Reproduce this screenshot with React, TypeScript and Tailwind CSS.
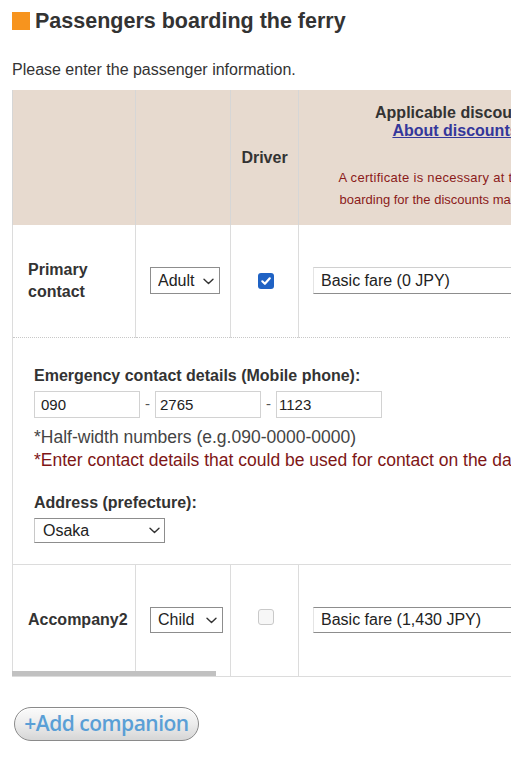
import React from "react";

function Chevron({ className }: { className: string }) {
  return (
    <svg
      className={className}
      width="11"
      height="7"
      viewBox="0 0 11 7"
      fill="none"
      stroke="#333"
      strokeWidth="1.4"
      strokeLinecap="round"
      strokeLinejoin="round"
    >
      <path d="M1 1.2 L5.5 5.6 L10 1.2" />
    </svg>
  );
}

function Checkbox({ checked }: { checked: boolean }) {
  if (checked) {
    return (
      <span className="inline-flex h-[16px] w-[16px] items-center justify-center rounded-[3px] bg-[#1f62c4]">
        <svg width="12" height="12" viewBox="0 0 12 12" fill="none" stroke="#fff" strokeWidth="2.2" strokeLinecap="round" strokeLinejoin="round">
          <path d="M2.3 6.3 L4.9 8.8 L9.8 3.3" />
        </svg>
      </span>
    );
  }
  return <span className="inline-block h-[16px] w-[16px] rounded-[3px] border border-[#c9c9c9] bg-[#f7f7f7]" />;
}

export default function App() {
  const th = "border-x border-[#d6d6d6] align-middle";
  const td = "border-x border-[#dcdcdc] align-middle";
  return (
    <div className="min-h-[763px] w-[523px] bg-white px-3 pt-3 font-['Liberation_Sans',Arial,sans-serif] text-[#333]">
      <h2 className="flex items-center gap-[5px] text-[21.5px] font-bold leading-[18px]">
        <span className="h-[18px] w-[18px] shrink-0 bg-[#f7941e]" />
        Passengers boarding the ferry
      </h2>
      <p className="mt-[29px] text-[16px] leading-[22px]">Please enter the passenger information.</p>

      <div className="relative mt-[9px]">
        <div className="overflow-x-hidden">
          <table className="w-[1220px] table-fixed border-collapse">
            <colgroup>
              <col className="w-[123px]" />
              <col className="w-[95px]" />
              <col className="w-[68px]" />
              <col className="w-[314px]" />
              <col className="w-[620px]" />
            </colgroup>
            <thead>
              <tr className="h-[135px] bg-[#e7dacf]">
                <th className={th}></th>
                <th className={th}></th>
                <th className={`${th} text-[16px] font-bold`}>Driver</th>
                <th className={`${th} text-center font-normal`}>
                  <div className="text-[16px] font-bold leading-[18px]">Applicable discounts</div>
                  <div className="text-[16px] font-bold leading-[18px]">
                    <a href="#" className="text-[#34379b] underline">About discounts</a>
                  </div>
                  <div className="mt-[27px] text-[13px] leading-[22px] text-[#8b1a1a]">
                    <span className="tracking-[0.3px]">A certificate is necessary at the time of</span>
                    <br />
                    boarding for the discounts marked with *
                  </div>
                </th>
                <th className={th}></th>
              </tr>
            </thead>
            <tbody>
              <tr className="h-[112px] border-b border-dotted border-[#c8c8c8]">
                <td className={`${td} pl-[15px] text-[16px] font-bold leading-[22px]`}>
                  Primary
                  <br />
                  contact
                </td>
                <td className={`${td} pl-[14px]`}>
                  <div className="relative inline-block">
                    <select defaultValue="Adult" className="block h-[27px] w-[70px] appearance-none border border-[#8d8d8d] bg-white pl-[7px] text-[16px] text-[#222] outline-none">
                      <option>Adult</option>
                      <option>Child</option>
                    </select>
                    <Chevron className="pointer-events-none absolute right-[6px] top-[11px]" />
                  </div>
                </td>
                <td className={`${td} pl-[3px] text-center`}>
                  <div className="flex justify-center">
                    <Checkbox checked />
                  </div>
                </td>
                <td className={`${td} pl-[14px]`}>
                  <select defaultValue="b" className="block h-[27px] w-[300px] appearance-none border border-l-[#e4e4e4] border-t-[#d0d0d0] border-r-[#8d8d8d] border-b-[#8d8d8d] bg-white pl-[7px] text-[16px] text-[#222] outline-none">
                    <option value="b">Basic fare (0 JPY)</option>
                  </select>
                </td>
                <td className={td}></td>
              </tr>
              <tr className="h-[226px] border-b border-[#dcdcdc]">
                <td colSpan={5} className="border-x border-[#dcdcdc] pl-[21px] pt-[27px] pb-[21px] align-top">
                  <div className="text-[16px] font-bold leading-[22px]">Emergency contact details (Mobile phone):</div>
                  <div className="mt-[4px] flex items-center">
                    <input defaultValue="090" className="h-[27px] w-[106px] border border-[#d2d2d2] px-[6px] text-[15px] text-[#222] outline-none" />
                    <span className="mx-[5px] text-[15px] text-[#555]">-</span>
                    <input defaultValue="2765" className="h-[27px] w-[106px] border border-[#d2d2d2] px-[4px] text-[15px] text-[#222] outline-none" />
                    <span className="mx-[5px] text-[15px] text-[#555]">-</span>
                    <input defaultValue="1123" className="h-[27px] w-[106px] border border-[#d2d2d2] px-[2px] text-[15px] text-[#222] outline-none" />
                  </div>
                  <div className="mt-[8px] whitespace-nowrap text-[17.5px] leading-[23px] text-[#444]">*Half-width numbers (e.g.090-0000-0000)</div>
                  <div className="whitespace-nowrap text-[17.5px] leading-[23px] text-[#7e1616]">
                    *Enter contact details that could be used for contact on the day of boarding.
                  </div>
                  <div className="mt-[20px] text-[16px] font-bold leading-[22px]">Address (prefecture):</div>
                  <div className="relative mt-[4px] inline-block">
                    <select defaultValue="Osaka" className="block h-[25px] w-[131px] appearance-none border border-[#8d8d8d] border-l-[#c8c8c8] bg-white pl-[8px] text-[16px] text-[#222] outline-none">
                      <option>Osaka</option>
                      <option>Tokyo</option>
                    </select>
                    <Chevron className="pointer-events-none absolute right-[5px] top-[9px]" />
                  </div>
                </td>
              </tr>
              <tr className="h-[112px] border-b border-[#dcdcdc]">
                <td className={`${td} pl-[15px] text-[16px] font-bold leading-[22px]`}>Accompany2</td>
                <td className={`${td} pl-[14px]`}>
                  <div className="relative inline-block">
                    <select defaultValue="Child" className="block h-[26px] w-[73px] appearance-none border border-[#8d8d8d] bg-white pl-[7px] text-[16px] text-[#222] outline-none">
                      <option>Adult</option>
                      <option>Child</option>
                    </select>
                    <Chevron className="pointer-events-none absolute right-[6px] top-[10px]" />
                  </div>
                </td>
                <td className={`${td} text-center`}>
                  <div className="flex justify-center pb-[6px] pl-[3px]">
                    <Checkbox checked={false} />
                  </div>
                </td>
                <td className={`${td} pl-[14px]`}>
                  <select defaultValue="b" className="block h-[26px] w-[300px] appearance-none border border-l-[#e4e4e4] border-t-[#8d8d8d] border-r-[#8d8d8d] border-b-[#8d8d8d] bg-white pl-[7px] text-[16px] text-[#222] outline-none">
                    <option value="b">Basic fare (1,430 JPY)</option>
                  </select>
                </td>
                <td className={td}></td>
              </tr>
            </tbody>
          </table>
        </div>
        <div className="absolute bottom-[1px] left-0 h-[5px] w-[204px] bg-[#c1c1c1]" />
      </div>

      <button
        type="button"
        className="mt-[30px] ml-[2px] flex h-[34px] w-[185px] items-center justify-center rounded-full border-[1.5px] border-[#8a8a8a] bg-gradient-to-b from-[#fbfbfb] via-[#ececec] to-[#d6d6d6] font-['Open_Sans',sans-serif] text-[21px] font-semibold tracking-[-0.5px] text-[#5a9fd6] shadow-[inset_0_1px_0_#fff]"
      >
        +Add companion
      </button>
    </div>
  );
}
